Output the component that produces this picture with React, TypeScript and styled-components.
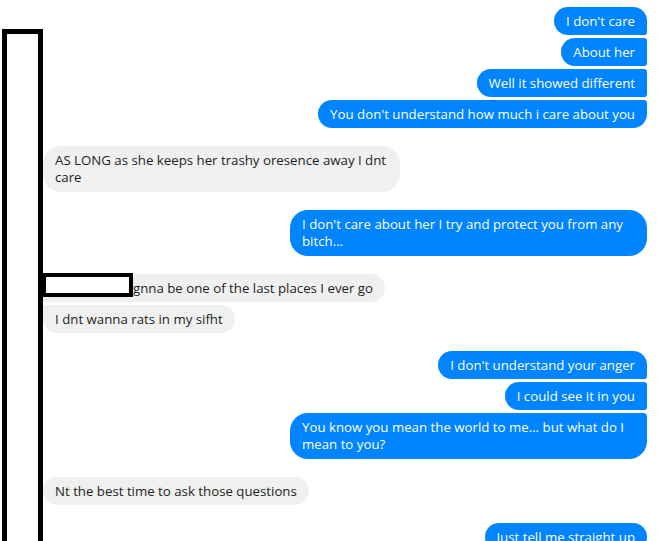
import React from "react";
import styled, { createGlobalStyle, css } from "styled-components";

const Global = createGlobalStyle`
  html, body { margin: 0; padding: 0; background: #ffffff; }
  body { font-family: "Open Sans", "Noto Sans", sans-serif; }
`;

const Screen = styled.div`
  position: relative;
  width: 665px;
  height: 541px;
  overflow: hidden;
  background: #ffffff;
`;

const Thread = styled.div`
  display: flex;
  flex-direction: column;
  gap: 18px;
  padding: 7px 18px 0 43px;
`;

const Group = styled.div<{ $mine?: boolean }>`
  display: flex;
  flex-direction: column;
  gap: 3px;
  align-items: ${(p) => (p.$mine ? "flex-end" : "flex-start")};
`;

type Pos = "single" | "first" | "middle" | "last";

const radius = (mine: boolean, pos: Pos) => {
  const big = "18px";
  const small = "4px";
  const top = pos === "single" || pos === "first" ? big : small;
  const bottom = pos === "single" || pos === "last" ? big : small;
  return mine
    ? `${big} ${top} ${bottom} ${big}`
    : `${top} ${big} ${big} ${bottom}`;
};

const Bubble = styled.div<{ $mine?: boolean; $pos: Pos; $lines?: number }>`
  position: relative;
  box-sizing: border-box;
  max-width: 357px;
  padding: 6px 12px ${(p) => ((p.$lines ?? 1) > 1 ? 6 : 5)}px;
  font-size: 13.25px;
  line-height: 17px;
  border-radius: ${(p) => radius(!!p.$mine, p.$pos)};
  ${(p) =>
    p.$mine
      ? css`
          background: #0084ff;
          color: #ffffff;
        `
      : css`
          background: #f1f0f0;
          color: #1c1e21;
        `}
`;

const Spacer = styled.span`
  display: inline-block;
  width: 78px;
`;

const RedactBox = styled.div`
  position: absolute;
  left: -1px;
  top: -1px;
  width: 91px;
  height: 24px;
  box-sizing: border-box;
  border: 4px solid #000000;
  background: #ffffff;
`;

const RedactBar = styled.div`
  position: absolute;
  left: 2px;
  top: 29px;
  width: 41px;
  bottom: -20px;
  box-sizing: border-box;
  border: 5px solid #000000;
  border-bottom: none;
  background: #ffffff;
`;

export default function App() {
  return (
    <Screen>
      <Global />
      <Thread>
        <Group $mine>
          <Bubble $mine $pos="first">I don't care</Bubble>
          <Bubble $mine $pos="middle">About her</Bubble>
          <Bubble $mine $pos="middle">Well it showed different</Bubble>
          <Bubble $mine $pos="last">You don't understand how much i care about you</Bubble>
        </Group>
        <Group>
          <Bubble $pos="single" $lines={2}>AS LONG as she keeps her trashy oresence away I dnt care</Bubble>
        </Group>
        <Group $mine>
          <Bubble $mine $pos="single" $lines={2}>I don't care about her I try and protect you from any bitch...</Bubble>
        </Group>
        <Group>
          <Bubble $pos="first">
            <Spacer />gnna be one of the last places I ever go
            <RedactBox />
          </Bubble>
          <Bubble $pos="last">I dnt wanna rats in my sifht</Bubble>
        </Group>
        <Group $mine>
          <Bubble $mine $pos="first">I don't understand your anger</Bubble>
          <Bubble $mine $pos="middle">I could see it in you</Bubble>
          <Bubble $mine $pos="last" $lines={2}>You know you mean the world to me... but what do I mean to you?</Bubble>
        </Group>
        <Group>
          <Bubble $pos="single">Nt the best time to ask those questions</Bubble>
        </Group>
        <Group $mine>
          <Bubble $mine $pos="single">Just tell me straight up</Bubble>
        </Group>
      </Thread>
      <RedactBar />
    </Screen>
  );
}
